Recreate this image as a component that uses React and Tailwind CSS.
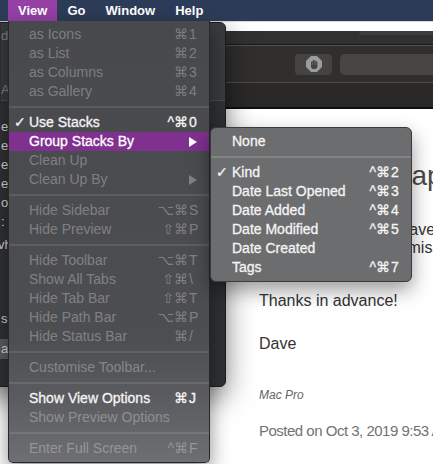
import React from 'react';

const MENU = [
  { label: 'as Icons', mods: '⌘', key: '1', dim: true },
  { label: 'as List', mods: '⌘', key: '2', dim: true },
  { label: 'as Columns', mods: '⌘', key: '3', dim: true },
  { label: 'as Gallery', mods: '⌘', key: '4', dim: true },
  'sep',
  { label: 'Use Stacks', check: true, mods: '^⌘', key: '0' },
  { label: 'Group Stacks By', sub: true, active: true },
  { label: 'Clean Up', dim: true },
  { label: 'Clean Up By', sub: true, dim: true },
  'sep',
  { label: 'Hide Sidebar', mods: '⌥⌘', key: 'S', dim: true },
  { label: 'Hide Preview', mods: '⇧⌘', key: 'P', dim: true },
  'sep',
  { label: 'Hide Toolbar', mods: '⌥⌘', key: 'T', dim: true },
  { label: 'Show All Tabs', mods: '⇧⌘', key: '\\', dim: true },
  { label: 'Hide Tab Bar', mods: '⇧⌘', key: 'T', dim: true },
  { label: 'Hide Path Bar', mods: '⌥⌘', key: 'P', dim: true },
  { label: 'Hide Status Bar', mods: '⌘', key: '/', dim: true },
  'sep',
  { label: 'Customise Toolbar...', dim: true },
  'sep',
  { label: 'Show View Options', mods: '⌘', key: 'J' },
  { label: 'Show Preview Options', dim: true },
  'sep',
  { label: 'Enter Full Screen', mods: '^⌘', key: 'F', dim: true },
];

const SUB = [
  { label: 'None' },
  'sep',
  { label: 'Kind', check: true, mods: '^⌘', key: '2' },
  { label: 'Date Last Opened', mods: '^⌘', key: '3' },
  { label: 'Date Added', mods: '^⌘', key: '4' },
  { label: 'Date Modified', mods: '^⌘', key: '5' },
  { label: 'Date Created' },
  { label: 'Tags', mods: '^⌘', key: '7' },
];

const Arrow = () => (
  <svg width="8" height="10" viewBox="0 0 8 10" className="mr-[2px]">
    <path d="M0 0L8 5L0 10Z" fill="currentColor" />
  </svg>
);

const MenuRow = ({ item, gutter }) => {
  const tone = item.active
    ? 'bg-[#80308f] text-white [-webkit-text-stroke:0.3px_white]'
    : item.dim
    ? 'text-white/30'
    : 'text-[#f4f4f4] [-webkit-text-stroke:0.3px_#f4f4f4]';
  return (
    <div className={`flex h-[19px] items-center pr-[10px] ${tone}`}>
      <span className={`shrink-0 pl-[5px] ${gutter}`}>{item.check ? '✓' : ''}</span>
      <span className="flex-1 whitespace-nowrap">{item.label}</span>
      {item.key && (
        <span className="flex whitespace-nowrap">
          <span>{item.mods}</span>
          <span className="w-[11px] pl-[1px]">{item.key}</span>
        </span>
      )}
      {item.sub && <Arrow />}
    </div>
  );
};

// little stop-sign/hand button in the safari toolbar
const HandIcon = () => (
  <svg width="16" height="16" viewBox="0 0 16 16">
    <path d="M5 0H11L16 5V11L11 16H5L0 11V5Z" fill="#9c9c9c" />
    <g fill="#454443">
      <rect x="5" y="5.5" width="1.5" height="5" rx="0.75" />
      <rect x="6.6" y="4" width="1.5" height="6" rx="0.75" />
      <rect x="8.2" y="4.2" width="1.5" height="6" rx="0.75" />
      <rect x="9.8" y="5.3" width="1.5" height="5" rx="0.75" />
      <path d="M5 9H11.3V10.6Q11.3 13 8.7 13H7.6Q5 13 5 10.6Z" />
    </g>
  </svg>
);

export default function App() {
  return (
    <div className="relative h-[464px] w-[433px] overflow-hidden bg-[#d9d9d9] font-['Liberation_Sans','DejaVu_Sans',sans-serif]">
      {/* Safari window (back) */}
      <div className="absolute left-[-20px] top-[22px] h-[460px] w-[470px] bg-white">
        <div className="h-[13px] bg-[#313131]">
          <div className="ml-[379px] mt-[9px] h-[4px] rounded-t-[5px] bg-[#3d3d3d]" />
        </div>
        <div className="h-px bg-[#1b1b1b]" />
        <div className="flex h-[38px] items-center gap-[8px] border-y border-t-[#525252] border-b-[#4d4d4d] bg-[#302f2e] pl-[315px]">
          <div className="flex h-[21px] w-[37px] items-center justify-center rounded-[4px] bg-[#444342]">
            <HandIcon />
          </div>
          <div className="h-[21px] flex-1 rounded-[5px] bg-[#474645]" />
        </div>
        <div className="h-[24px] bg-[#2a2928]" />
        <div className="h-[2px] bg-[#0e0e0e]" />

        <div className="pl-[279px] text-[#333]">
          <h1 className="mt-[50px] whitespace-nowrap text-[28px] leading-[34px] text-[#4a4a4a]">
            Stacks overlap in Finder
          </h1>
          <p className="mt-[28px] whitespace-nowrap text-[16px] leading-[18px]">
            Hi, on my desktop I have several stacks
            <br />
            but the sort option is missing
            <br />
            Any ideas?
          </p>
          <p className="mt-[17px] text-[16px] leading-[18px]">Thanks in advance!</p>
          <p className="mt-[25px] text-[16px] leading-[18px]">Dave</p>
          <p className="mt-[34px] text-[12px] italic leading-[16px] text-[#666]">Mac Pro</p>
          <p className="mt-[19px] whitespace-nowrap text-[15px] leading-[18px] tracking-[-0.5px] text-[#727272]">
            Posted on Oct 3, 2019 9:53 AM
          </p>
        </div>
      </div>

      {/* Finder window (middle) */}
      <div className="absolute left-[-20px] top-[22px] h-[365px] w-[246px] overflow-hidden rounded-[6px] border border-[#1d1d1f] bg-[#303134] pl-[20px] text-[13px] leading-[19px] shadow-[0_10px_28px_rgba(0,0,0,0.5)]">
        <div className="h-[78px] border-b border-[#4c4d50] bg-[#3a3b3e] pt-[3px] text-[#808184]">
          <div className="h-[19px]">d</div>
          <div className="mt-[35px] h-[19px]">A</div>
        </div>
        <div className="pt-[16px] text-[#d6d6d6]">
          <div className="h-[19px]">e</div>
          <div className="h-[19px]">ef</div>
          <div className="h-[19px]">ef</div>
          <div className="h-[19px]">ef</div>
          <div className="h-[19px]">o</div>
          <div className="h-[19px]">:</div>
          <div className="-ml-[3px] mt-[4px] h-[19px]">vh</div>
          <div className="mt-[55px] h-[19px]">s</div>
          <div className="-ml-[20px] mt-[11px] h-[20px] w-[200px] bg-[#5b5c5f] pl-[20px]">a</div>
        </div>
      </div>

      {/* menu bar */}
      <div className="absolute inset-x-0 top-0 flex h-[21px] items-center bg-[#2c3b57] pl-[8px] text-[13px] font-bold text-white">
        <span className="flex h-full items-center bg-[#9440a4] px-[10px]">View</span>
        <span className="px-[10px]">Go</span>
        <span className="px-[10px]">Window</span>
        <span className="px-[10px]">Help</span>
      </div>

      {/* View menu */}
      <div className="absolute left-[8px] top-[21px] w-[202px] rounded-b-[5px] border-x border-b border-[#26272a] bg-[linear-gradient(to_bottom,#48494c_0%,#4d4e51_72%,#5a5b5e_85%,#6e6f72_100%)] pb-[4px] pt-[4px] text-[14px] leading-[19px] shadow-[0_8px_20px_rgba(0,0,0,0.45)]">
        {MENU.map((item, i) =>
          item === 'sep' ? (
            <div key={i} className="my-[5px] h-[2px] bg-white/10" />
          ) : (
            <MenuRow key={i} item={item} gutter="w-[20px]" />
          )
        )}
      </div>

      {/* Group Stacks By submenu */}
      <div className="absolute left-[210px] top-[127px] w-[202px] rounded-[6px] border border-[#3b3b3d] bg-[#6c6d6f] pb-[4px] pt-[4px] text-[14px] leading-[19px] shadow-[0_8px_20px_rgba(0,0,0,0.4)]">
        {SUB.map((item, i) =>
          item === 'sep' ? (
            <div key={i} className="my-[5px] h-[2px] bg-white/15" />
          ) : (
            <MenuRow key={i} item={item} gutter="w-[21px]" />
          )
        )}
      </div>
    </div>
  );
}
